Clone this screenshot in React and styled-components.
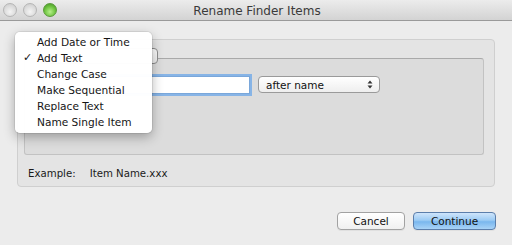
import React from "react";
import styled, { createGlobalStyle } from "styled-components";

const Global = createGlobalStyle`
  html, body { margin: 0; padding: 0; background: #ececec; }
  body { font-family: "DejaVu Sans", "Liberation Sans", sans-serif; color: #1a1a1a; }
  * { box-sizing: border-box; }
`;

const Window = styled.div`
  position: relative;
  width: 512px;
  height: 245px;
  background: #ececec;
  display: flex;
  flex-direction: column;
  overflow: hidden;
`;

const TitleBar = styled.div`
  position: relative;
  height: 21px;
  flex: none;
  background: linear-gradient(#ececec, #d3d3d3);
  border-bottom: 1px solid #9a9a9a;
  display: flex;
  align-items: center;
  justify-content: center;
`;

const Lights = styled.div`
  position: absolute;
  left: 3px;
  top: 3px;
  display: flex;
  gap: 6px;
`;

const Light = styled.span`
  width: 14px;
  height: 14px;
  border-radius: 50%;
  border: 1px solid ${(p) => (p.$active ? "#5a9a3a" : "#b5b5b5")};
  background: ${(p) =>
    p.$active
      ? "radial-gradient(circle at 50% 65%, #b6f08a 0%, #6cc23e 55%, #3f8d22 100%)"
      : "radial-gradient(circle at 50% 65%, #f4f4f4 0%, #dadada 60%, #c8c8c8 100%)"};
`;

const Title = styled.div`
  font-size: 12px;
  color: #3a3a3a;
  margin-top: 1px;
  margin-left: 2px;
`;

const Content = styled.div`
  flex: 1;
  display: flex;
  flex-direction: column;
  padding: 18px 17px 0 17px;
`;

const OuterBox = styled.div`
  position: relative;
  height: 148px;
  background: #e4e4e4;
  border: 1px solid #cfcfcf;
  border-radius: 4px;
  padding: 18px 10px 0 6px;
  display: flex;
  flex-direction: column;
`;

const PopupButton = styled.div`
  position: absolute;
  left: 22px;
  top: 8px;
  width: 118px;
  height: 16px;
  border: 1px solid #8e8e8e;
  border-radius: 4px;
  background: linear-gradient(#ffffff, #ececec);
  z-index: 2;
`;

const InnerBox = styled.div`
  height: 97px;
  background: #dcdcdc;
  border: 1px solid #c2c2c2;
  border-top-color: #a9a9a9;
  border-radius: 3px;
  display: flex;
  align-items: flex-start;
  padding: 16px 0 0 16px;
  gap: 8px;
`;

const TextField = styled.div`
  width: 207px;
  height: 18px;
  background: #fff;
  border: 1px solid #7aa7da;
  box-shadow: 0 0 0 2px #87b4e6;
  margin-top: 1px;
  margin-left: 2px;
`;

const Select = styled.div`
  width: 122px;
  height: 17px;
  border: 1px solid #9a9a9a;
  border-radius: 4px;
  background: linear-gradient(#ffffff, #eeeeee);
  display: flex;
  align-items: center;
  justify-content: space-between;
  padding: 0 6px 0 7px;
  font-size: 10.5px;
  color: #111;
  margin-top: 1px;
`;

const Arrows = styled.svg`
  width: 6px;
  height: 9px;
`;

const ExampleRow = styled.div`
  display: flex;
  gap: 14px;
  font-size: 10.2px;
  padding: 13px 0 0 4px;
  color: #1a1a1a;
`;

const ButtonRow = styled.div`
  display: flex;
  justify-content: flex-end;
  gap: 8px;
  padding: 25px 0 0 0;
  margin-right: -1px;
`;

const Button = styled.div`
  height: 18px;
  width: ${(p) => p.$w}px;
  border-radius: 4px;
  border: 1px solid ${(p) => (p.$primary ? "#5b7eab" : "#a2a2a2")};
  background: ${(p) =>
    p.$primary
      ? "linear-gradient(#cfe5fb 0%, #9ccbf4 45%, #7ab7ee 55%, #a9d3f7 100%)"
      : "linear-gradient(#ffffff, #f0f0f0)"};
  display: flex;
  align-items: center;
  justify-content: center;
  font-size: 10.5px;
  color: #111;
  box-shadow: 0 1px 0 rgba(0, 0, 0, 0.05);
`;

const Menu = styled.div`
  position: absolute;
  left: 15px;
  top: 32px;
  width: 137px;
  padding: 2px 0 3px 0;
  background: rgba(255, 255, 255, 0.98);
  border-radius: 5px;
  box-shadow: 0 4px 12px rgba(0, 0, 0, 0.3), 0 0 0 1px rgba(0, 0, 0, 0.07);
  z-index: 10;
`;

const MenuItem = styled.div`
  position: relative;
  height: 16px;
  line-height: 16px;
  padding-left: 22px;
  font-size: 10.6px;
  color: #151515;
`;

const Check = styled.span`
  position: absolute;
  left: 8px;
  top: 0;
  font-size: 11px;
`;

const items = [
  "Add Date or Time",
  "Add Text",
  "Change Case",
  "Make Sequential",
  "Replace Text",
  "Name Single Item",
];

export default function App() {
  return (
    <>
      <Global />
      <Window>
        <TitleBar>
          <Lights>
            <Light />
            <Light />
            <Light $active />
          </Lights>
          <Title>Rename Finder Items</Title>
        </TitleBar>
        <Content>
          <OuterBox>
            <PopupButton />
            <InnerBox>
              <TextField />
              <Select>
                <span>after name</span>
                <Arrows viewBox="0 0 6 9">
                  <path d="M3 0.5 L5.5 3.5 H0.5 Z" fill="#333" />
                  <path d="M3 8.5 L5.5 5.5 H0.5 Z" fill="#333" />
                </Arrows>
              </Select>
            </InnerBox>
            <ExampleRow>
              <span>Example:</span>
              <span>Item Name.xxx</span>
            </ExampleRow>
          </OuterBox>
          <ButtonRow>
            <Button $w={68}>Cancel</Button>
            <Button $w={83} $primary>
              Continue
            </Button>
          </ButtonRow>
        </Content>
        <Menu>
          {items.map((t) => (
            <MenuItem key={t}>
              {t === "Add Text" && <Check>✓</Check>}
              {t}
            </MenuItem>
          ))}
        </Menu>
      </Window>
    </>
  );
}
